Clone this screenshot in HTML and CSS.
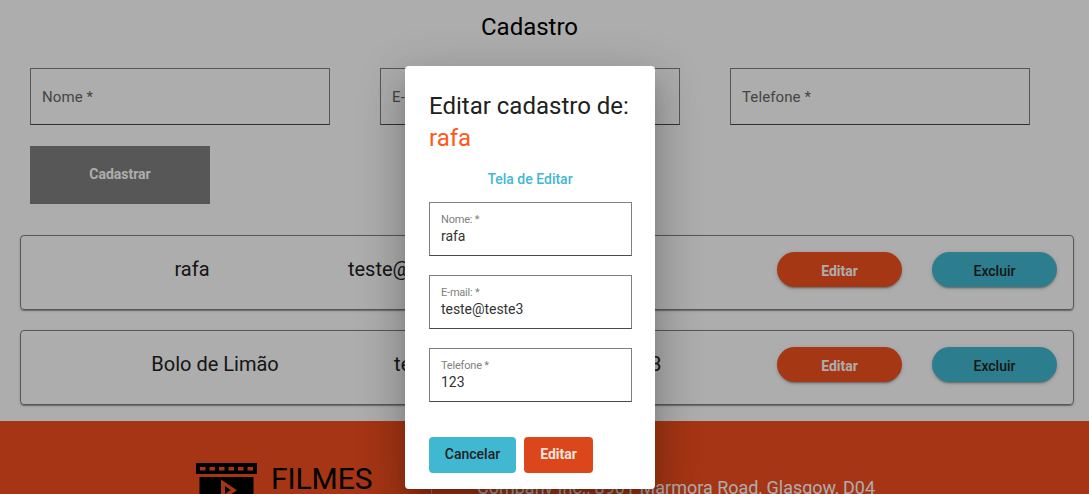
FILE: index.html
```html
<!DOCTYPE html>
<html lang="pt-BR">
<head>
<meta charset="utf-8">
<title>Cadastro</title>
<link rel="stylesheet" href="styles.css">
</head>
<body>
<main class="page">
  <h1 class="page-title">Cadastro</h1>
  <form class="signup">
    <div class="signup-fields">
      <label class="field">Nome *</label>
      <label class="field">E-mail *</label>
      <label class="field">Telefone *</label>
    </div>
    <button type="button" class="submit">Cadastrar</button>
  </form>
  <section class="list">
    <article class="card">
      <div class="card-data"><span>rafa</span><span>teste@teste3</span><span>123</span></div>
      <div class="card-actions"><button type="button" class="pill edit">Editar</button><button type="button" class="pill remove">Excluir</button></div>
    </article>
    <article class="card">
      <div class="card-data"><span>Bolo de Limão</span><span>teste@teste3</span><span>123</span></div>
      <div class="card-actions"><button type="button" class="pill edit">Editar</button><button type="button" class="pill remove">Excluir</button></div>
    </article>
  </section>
  <footer class="footer">
    <div class="brand">
      <svg class="brand-icon" width="61" height="50" viewBox="0 0 61 50">
        <path fill-rule="evenodd" d="M0 0H61V11H0ZM4 4V7.500H9.500V4ZM13.500 4V7.500H19V4ZM23 4V7.500H28.500V4ZM32.500 4V7.500H38V4ZM42 4V7.500H47.500V4ZM51.500 4V7.500H57V4ZM3.500 14H57.500V50H3.500ZM25 16.500V38L41 27.200ZM29 23L34.500 27L29 31Z"/>
      </svg>
      <span class="brand-name">FILMES</span>
    </div>
    <p class="address">Company Inc., 8901 Marmora Road, Glasgow, D04</p>
  </footer>
</main>
<div class="overlay">
  <section class="dialog" role="dialog">
    <h2 class="dialog-title">Editar cadastro de: <span class="dialog-name">rafa</span></h2>
    <p class="dialog-subtitle">Tela de Editar</p>
    <div class="dialog-fields">
      <div class="dialog-field"><span class="dialog-label">Nome: *</span><span class="dialog-value">rafa</span></div>
      <div class="dialog-field"><span class="dialog-label">E-mail: *</span><span class="dialog-value">teste@teste3</span></div>
      <div class="dialog-field"><span class="dialog-label">Telefone *</span><span class="dialog-value">123</span></div>
    </div>
    <div class="dialog-actions">
      <button type="button" class="action cancel">Cancelar</button>
      <button type="button" class="action confirm">Editar</button>
    </div>
  </section>
</div>
</body>
</html>
```

FILE: styles.css
```css
* { box-sizing: border-box; }
body { margin: 0; height: 494px; overflow: hidden; font-family: Roboto, sans-serif; color: #000; background: #fff; }
h1, h2, p { margin: 0; font-weight: 400; }
button { border: 0; padding: 0; font-family: inherit; }

.page { height: 494px; overflow: hidden; }
.page-title { padding-top: 11px; width: 1059px; font-size: 24px; line-height: 32px; text-align: center; }

.signup { padding: 25px 30px 0; }
.signup-fields { display: flex; gap: 50px; }
.field { width: 300px; height: 57px; padding-left: 11px; border: 1px solid #808080; border-bottom-color: #494949; font-size: 15px; line-height: 56px; letter-spacing: .1px; color: #666; }
.submit { display: block; margin-top: 21px; width: 180px; height: 58px; padding-bottom: 2px; background: #808080; color: #fff; font-size: 14px; font-weight: 700; }

.list { display: flex; flex-direction: column; gap: 20px; padding: 31px 15px 16px 20px; }
.card { display: flex; height: 75px; padding: 16px 16px 16px 15px; border: 1px solid #808080; border-radius: 4px; box-shadow: 0 2px 1px -1px rgba(0,0,0,.2), 0 1px 1px rgba(0,0,0,.14), 0 1px 3px rgba(0,0,0,.12); }
.card-data { flex: 1; display: flex; justify-content: space-evenly; font-size: 20px; line-height: 34px; color: #212121; }
.card-actions { display: flex; gap: 30px; }
.pill { width: 125px; height: 35px; border-radius: 18px; padding-top: 2px; font-size: 14px; box-shadow: 0 3px 1px -2px rgba(0,0,0,.2), 0 2px 2px rgba(0,0,0,.14), 0 1px 5px rgba(0,0,0,.12); }
.edit { background: #f4511e; color: #fff; font-weight: 700; }
.remove { background: #41b8d1; color: #212121; font-weight: 500; }

.footer { display: flex; height: 150px; padding: 42px 0 0 196px; background: #f44e1e; }
.brand { display: flex; gap: 14px; width: 236px; border-right: 1px solid #f8a48c; }
.brand-name { font-size: 30px; line-height: 31px; letter-spacing: -.1px; }
.address { padding: 13px 0 0 45px; font-size: 18px; line-height: 24px; color: #fff; }

.overlay { position: absolute; inset: 0; padding: 66px 0 0 405px; background: rgba(0,0,0,.32); }
.dialog { width: 250px; height: 423px; padding: 24px 23px 0 24px; border-radius: 4px; background: #fff; box-shadow: 0 11px 15px -7px rgba(0,0,0,.2), 0 24px 38px 3px rgba(0,0,0,.14), 0 9px 46px 8px rgba(0,0,0,.12); }
.dialog-title { font-size: 24px; line-height: 32px; white-space: nowrap; color: #212121; }
.dialog-name { display: block; color: #ff5722; }
.dialog-subtitle { padding: 15px 1px 0 0; font-size: 14px; line-height: 20px; font-weight: 500; text-align: center; color: #41b8d1; }
.dialog-fields { display: flex; flex-direction: column; gap: 19px; padding-top: 13px; }
.dialog-field { display: flex; flex-direction: column; height: 54px; padding: 10px 11px 0; border: 1px solid #808080; border-bottom-color: #494949; }
.dialog-label { font-size: 11px; line-height: 13px; letter-spacing: -.2px; color: #808080; }
.dialog-value { font-size: 14px; line-height: 20px; letter-spacing: -.05px; color: #333; }
.dialog-actions { display: flex; gap: 8px; padding-top: 35px; }
.action { height: 36px; border-radius: 4px; padding-bottom: 2px; font-size: 14px; }
.cancel { width: 87px; background: #41b8d1; color: #212121; font-weight: 500; }
.confirm { width: 69px; background: #db471a; color: #f6e3dd; font-weight: 700; }
```
